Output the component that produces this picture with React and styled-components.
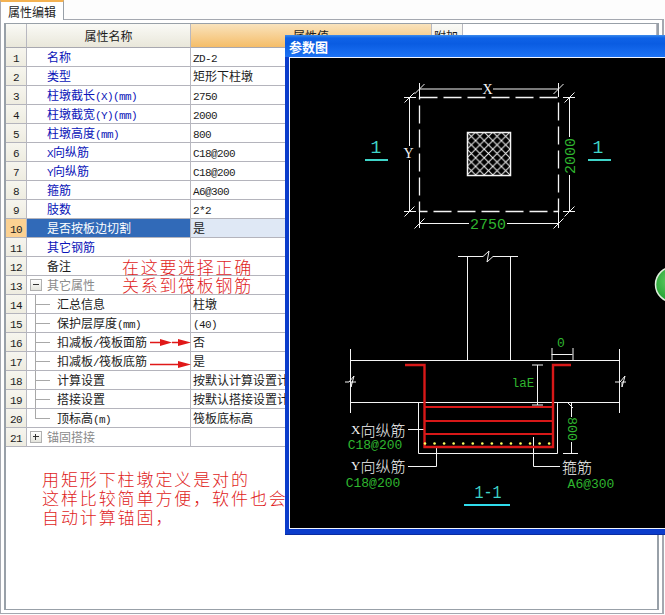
import React from "react";
import styled, { createGlobalStyle } from "styled-components";

const CJK = `"Noto Sans CJK SC", "Liberation Sans", sans-serif`;
const MONO = `"Liberation Mono", monospace`;
const SERIF = `"Liberation Serif", serif`;

const Global = createGlobalStyle`
  html, body { margin: 0; padding: 0; background: #fff; overflow: hidden; }
  #root { width: 665px; height: 615px; }
`;

const Page = styled.div`
  position: relative;
  width: 665px;
  height: 615px;
  overflow: hidden;
  display: flex;
  flex-direction: column;
  background: #fdfdfd;
  font-family: ${CJK};
  font-size: 12px;
  color: #1c1c1c;
`;
const TabStrip = styled.div`
  height: 19px;
  display: flex;
  flex: none;
`;
const Tab = styled.div`
  position: relative;
  z-index: 1;
  box-sizing: border-box;
  width: 64px;
  height: 20px;
  padding-left: 8px;
  line-height: 19px;
  background: #fff;
  border-top: 2px solid #f4b252;
  border-right: 1px solid #98a0a8;
  border-left: 1px solid #a8a8b0;
  text-indent: -1px;
`;
const TabPage = styled.div`
  box-sizing: border-box;
  width: 664px;
  height: 595px;
  flex: none;
  padding: 3px;
  border: 1px solid #a4a8b0;
  border-width: 1px 2px 1px 1px;
  background: #fff;
  display: flex;
`;
const Panel = styled.div`
  flex: 1;
  border: 1px solid #98a0a8;
  border-width: 1px 2px 1px 2px;
  background: #fff;
  display: flex;
  flex-direction: column;
`;
const Row = styled.div`
  display: grid;
  grid-template-columns: 21px 164px 241px 31px 1fr;
  height: ${p => (p.$header ? 24 : 19)}px;
  flex: none;
`;
const Cell = styled.div`
  position: relative;
  box-sizing: border-box;
  white-space: nowrap;
  overflow: hidden;
  line-height: 18px;
  border-right: 1px solid #b8b8c0;
  border-bottom: 1px solid #b4b4bc;
`;
const NumCell = styled(Cell)`
  text-align: center;
  background: ${p => (p.$active ? "#fbd192" : "linear-gradient(#f6f5ee, #eeece0)")};
`;
const NameCell = styled(Cell)`
  padding-left: ${p => (p.$child ? 30 : 20)}px;
  color: ${p => (p.$selected ? "#fff" : p.$tone === "blue" ? "#0a14b8" : p.$tone === "gray" ? "#8a8a8a" : "#1c1c1c")};
  background: ${p => (p.$selected ? "#316ab8" : "#fff")};
  &::before {
    content: ${p => (p.$child ? '""' : "none")};
    position: absolute;
    left: 8px;
    top: 0;
    bottom: ${p => (p.$last ? "9px" : "0")};
    border-left: 1px solid #a8a8a8;
  }
  &::after {
    content: ${p => (p.$child ? '""' : "none")};
    position: absolute;
    left: 8px;
    width: 15px;
    top: 9px;
    border-top: 1px solid #a8a8a8;
  }
`;
const ValueCell = styled(Cell)`
  padding-left: 2px;
  background: ${p => (p.$selected ? "#dfe8f5" : "#fff")};
`;
const PlainCell = styled(Cell)`
  border-right: ${p => (p.$open ? "none" : "1px solid #b8b8c0")};
`;
const HeadCell = styled(Cell)`
  line-height: 23px;
  text-align: ${p => p.$align || "center"};
  padding-left: ${p => (p.$align === "left" ? "2px" : "0")};
  background: ${p => p.$hot ? "linear-gradient(#f9e3bd, #f5bd68)" : p.$blank ? "#fff" : "linear-gradient(#fafaf6, #e9e7da)"};
  border-bottom-color: #a8a8b0;
`;
const Toggle = styled.span`
  position: absolute;
  left: 3px;
  top: 3px;
  box-sizing: border-box;
  width: 12px;
  height: 12px;
  background: linear-gradient(#fff, #e4e4dc);
  border: 1px solid #b0b0b0;
  z-index: 1;
  &::before {
    content: "";
    position: absolute;
    left: 2px;
    right: 2px;
    top: 4px;
    border-top: 1px solid #333;
  }
  &::after {
    content: ${p => (p.$plus ? '""' : "none")};
    position: absolute;
    top: 2px;
    bottom: 2px;
    left: 4px;
    border-left: 1px solid #333;
  }
`;
const Latin = styled.span`
  font-family: ${MONO};
  font-size: 11px;
  letter-spacing: -0.6px;
`;
const Note = styled.div`
  position: absolute;
  left: ${p => p.$left}px;
  top: ${p => p.$top}px;
  color: #e01c1c;
  font-size: 17px;
  letter-spacing: ${p => p.$gap}px;
  line-height: ${p => p.$lead}px;
  white-space: nowrap;
  font-weight: 300;
`;
const ArrowLayer = styled.svg`
  position: absolute;
  left: 0;
  top: 0;
  width: 300px;
  height: 400px;
`;
const Dialog = styled.div`
  position: absolute;
  left: 285px;
  top: 35px;
  width: 420px;
  height: 500px;
  display: flex;
  flex-direction: column;
  background: #0b3ccb;
  padding: 0 0 5px 4px;
  box-sizing: border-box;
  border-bottom: 1px solid #0a2ca0;
`;
const TitleBar = styled.div`
  height: 22px;
  flex: none;
  margin-left: -4px;
  padding-left: 4px;
  background: linear-gradient(#3d8cec 0, #0e62e6 3px, #0a5ce2 40%, #1c72f4 100%);
  color: #fff;
  font-weight: 700;
  font-size: 13px;
  line-height: 24px;
`;
const Client = styled.div`
  flex: 1;
  border: 1px solid #f2f6ff;
  border-right: none;
  background: #000;
  overflow: hidden;
  display: flex;
`;
const Drawing = styled.svg`
  display: block;
  flex: none;
  width: 375px;
  height: 472px;
`;

const mixed = s =>
  s.split(/([\x00-\x7f]+)/).map((part, i) =>
    /[\x00-\x7f]/.test(part) ? <Latin key={i}>{part}</Latin> : part
  );

const rows = [
  ["名称", "ZD-2", "blue"],
  ["类型", "矩形下柱墩", "blue"],
  ["柱墩截长(X)(mm)", "2750", "blue"],
  ["柱墩截宽(Y)(mm)", "2000", "blue"],
  ["柱墩高度(mm)", "800", "blue"],
  ["X向纵筋", "C18@200", "blue"],
  ["Y向纵筋", "C18@200", "blue"],
  ["箍筋", "A6@300", "blue"],
  ["肢数", "2*2", "blue"],
  ["是否按板边切割", "是", "blue", { selected: true }],
  ["其它钢筋", "", "blue"],
  ["备注", "", "black"],
  ["其它属性", "", "gray", { toggle: "minus" }],
  ["汇总信息", "柱墩", "black", { child: true }],
  ["保护层厚度(mm)", "(40)", "black", { child: true }],
  ["扣减板/筏板面筋", "否", "black", { child: true }],
  ["扣减板/筏板底筋", "是", "black", { child: true }],
  ["计算设置", "按默认计算设置计算", "black", { child: true }],
  ["搭接设置", "按默认搭接设置计算", "black", { child: true }],
  ["顶标高(m)", "筏板底标高", "black", { child: true, last: true }],
  ["锚固搭接", "", "gray", { toggle: "plus" }],
];

const WHITE = "#f4f4f4";
const GREEN = "#2fb52f";
const CYAN = "#3fd4c8";
const RED = "#d81818";

const Tick = ({ x, y }) => (
  <path d={`M${x - 5} ${y + 5}L${x + 5} ${y - 5}`} stroke={WHITE} strokeWidth="1" fill="none" />
);
const Label = ({ x, y, size = 13, fill = GREEN, rotate, family = MONO, children, ...rest }) => (
  <text
    x={x}
    y={y}
    fontFamily={family}
    fontSize={size}
    fill={fill}
    textAnchor="middle"
    dominantBaseline="central"
    transform={rotate ? `rotate(${rotate} ${x} ${y})` : undefined}
    {...rest}
  >
    {children}
  </text>
);
const CadCjk = ({ x, y, lead, children }) => (
  <text x={x} y={y} fill={WHITE} fontFamily={CJK} fontSize="15" fontWeight="300" dominantBaseline="central">
    {lead && <tspan fontFamily={SERIF} fontSize="13">{lead}</tspan>}
    {children}
  </text>
);

const dots = Array.from({ length: 14 }, (_, i) => 425 + i * 9.55);

const CadDrawing = () => (
  <Drawing viewBox="290 58 375 472">
    <defs>
      <pattern id="hatch" width="8.6" height="8.6" patternUnits="userSpaceOnUse" x="467" y="132">
        <path d="M0 0L8.6 8.6M8.6 0L0 8.6" stroke={WHITE} strokeWidth="1" />
      </pattern>
      <radialGradient id="ball" cx="0.45" cy="0.4" r="0.7">
        <stop offset="0" stopColor="#6ad06a" />
        <stop offset="0.7" stopColor="#2ca83a" />
        <stop offset="1" stopColor="#1c8a2c" />
      </radialGradient>
    </defs>

    {/* plan view */}
    <g fill="none" stroke={WHITE} strokeWidth="1">
      <rect x="419.5" y="97.5" width="139" height="114" strokeWidth="1.3" strokeDasharray="18 6" />
      <rect x="467.5" y="132.5" width="43" height="43" fill="url(#hatch)" strokeWidth="1.5" />
      <path d="M419.5 83V97M558.5 83V97M419.5 89H482M493 89H558.5" />
      <path d="M404 97.5H416M404 211.5H416M409.5 97.5V146M409.5 160V211.5" />
      <path d="M563 97.5H575M563 211.5H575M569.5 97.5V137M569.5 175V211.5" />
      <path d="M419.5 212V228M558.5 212V228M419.5 223.5H469M507 223.5H558.5" />
    </g>
    <Tick x={419.5} y={89} />
    <Tick x={558.5} y={89} />
    <Tick x={409.5} y={97.5} />
    <Tick x={409.5} y={211.5} />
    <Tick x={569.5} y={97.5} />
    <Tick x={569.5} y={211.5} />
    <Tick x={419.5} y={223.5} />
    <Tick x={558.5} y={223.5} />
    <Label x={487.5} y={89} fill={WHITE} family={SERIF} size={14}>X</Label>
    <Label x={408.5} y={153} fill={WHITE} family={SERIF} size={14}>Y</Label>
    <Label x={488} y={225} size={15}>2750</Label>
    <Label x={571} y={156} size={15} rotate={-90}>2000</Label>
    <path d="M365 160H388M588 160H611" stroke={CYAN} strokeWidth="2" />
    <Label x={376} y={148} size={18} fill={CYAN}>1</Label>
    <Label x={598} y={148} size={18} fill={CYAN}>1</Label>

    {/* section view */}
    <g fill="none" stroke={WHITE} strokeWidth="1">
      <path d="M458 256.5H483L489 251L487 262L493 256.5H518" />
      <path d="M467.5 256.5V360.5M510.5 256.5V360.5" />
      <path d="M350.5 360.5H619.5M350.5 402.5H619.5" />
      <path d="M350.5 349V413M619.5 349V413" />
      <path d="M345 382H349L354 376L351 387V382H356M615 382H620L625 376L622 387V382H626" />
      <path d="M418.5 402.5V453.5H557.5V402.5" />
      <path d="M551.5 354.5H572.5M552 348V361M573 348V361" />
      <path d="M537.5 365V405M532 365H543M532 405H543" />
      <path d="M571.5 403V417M571.5 442V453M563 453.5H578" />
      <path d="M408 429.5H424" />
      <path d="M408 466.5H436.5V446" />
      <path d="M533.5 437V466.5H560" />
      <path d="M567 402L573 408" />
    </g>
    <path d="M405 365H424.5V447H553V365H571" fill="none" stroke={RED} strokeWidth="2.4" />
    <path d="M424 407H553M424 421H553M424 434H553" stroke={RED} strokeWidth="2.2" />
    {dots.map(x => (
      <circle key={x} cx={x} cy={443.5} r="1.3" fill="#ffff60" />
    ))}
    <Label x={561} y={343}>0</Label>
    <Label x={523} y={384} size={12.5}>laE</Label>
    <Label x={571} y={429} size={13.4} rotate={90}>800</Label>
    <CadCjk x={351} y={429} lead="X">向纵筋</CadCjk>
    <Label x={375} y={445}>C18@200</Label>
    <CadCjk x={351} y={465} lead="Y">向纵筋</CadCjk>
    <Label x={373} y={483}>C18@200</Label>
    <CadCjk x={562} y={466}>箍筋</CadCjk>
    <Label x={591} y={484}>A6@300</Label>
    <Label x={488} y={493} size={18} fill={CYAN} textLength="27" lengthAdjust="spacingAndGlyphs">1-1</Label>
    <path d="M464 505H510" stroke="#30dcec" strokeWidth="2" />

    {/* floating green button, cut by the window edge */}
    <circle cx="673" cy="284.5" r="17.5" fill="url(#ball)" stroke="#dfeedd" strokeWidth="1.5" />
  </Drawing>
);

export default function App() {
  return (
    <Page>
      <Global />
      <TabStrip>
        <Tab>属性编辑</Tab>
      </TabStrip>
      <TabPage>
        <Panel>
          <Row $header>
            <HeadCell />
            <HeadCell>属性名称</HeadCell>
            <HeadCell $hot>属性值</HeadCell>
            <HeadCell $align="left">附加</HeadCell>
            <HeadCell $blank />
          </Row>
          {rows.map(([name, value, tone, opt = {}], i) => (
            <Row key={i}>
              <NumCell $active={opt.selected}>
                <Latin>{i + 1}</Latin>
              </NumCell>
              <NameCell $tone={tone} $selected={opt.selected} $child={opt.child} $last={opt.last}>
                {opt.toggle && <Toggle $plus={opt.toggle === "plus"} />}
                {mixed(name)}
              </NameCell>
              <ValueCell $selected={opt.selected}>{mixed(value)}</ValueCell>
              <PlainCell />
              <PlainCell $open />
            </Row>
          ))}
        </Panel>
      </TabPage>

      <Note $left={122} $top={258} $gap={1.7} $lead={18}>
        在这要选择正确
        <br />
        关系到筏板钢筋
      </Note>
      <Note $left={42} $top={469} $gap={1.9} $lead={19}>
        用矩形下柱墩定义是对的
        <br />
        这样比较简单方便，软件也会
        <br />
        自动计算锚固，
      </Note>
      <ArrowLayer viewBox="0 0 300 400">
        <path d="M150 342.5H164M172 342.5H182M150 364.5H182" stroke="#e01818" strokeWidth="1.4" />
        <path d="M160 339L172 342.5L160 346ZM178 339L191 342.5L178 346ZM178 361L191 364.5L178 368Z" fill="#e01818" />
      </ArrowLayer>

      <Dialog>
        <TitleBar>参数图</TitleBar>
        <Client>
          <CadDrawing />
        </Client>
      </Dialog>
    </Page>
  );
}
